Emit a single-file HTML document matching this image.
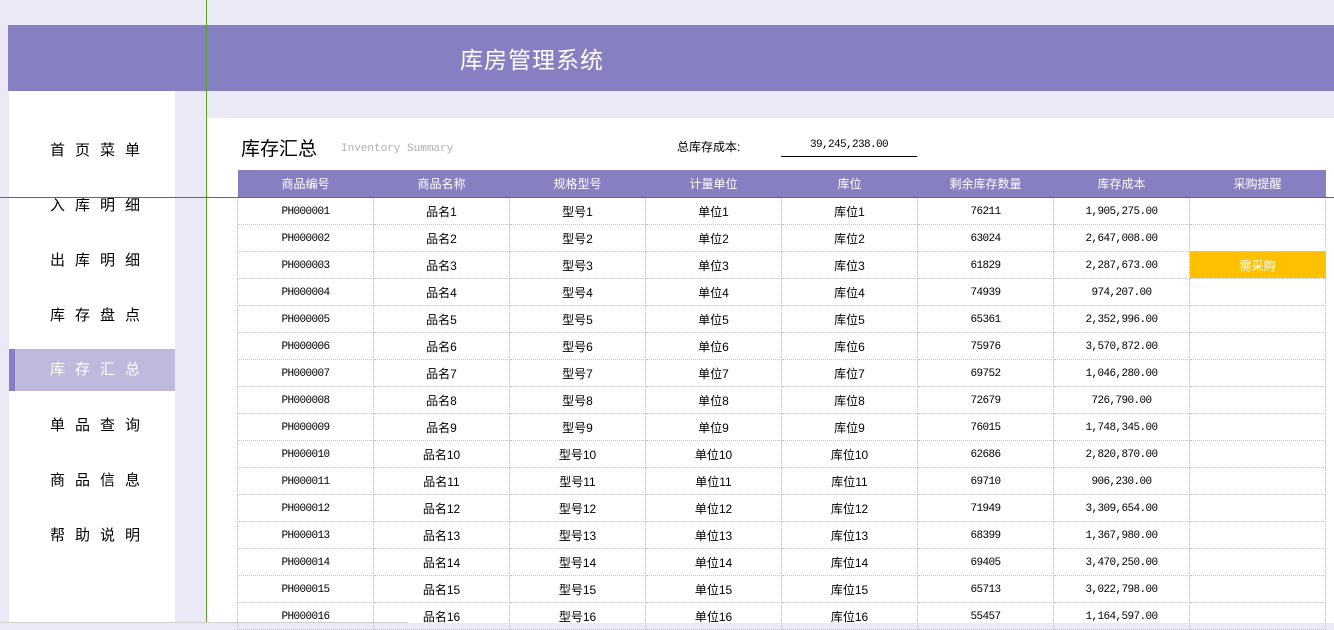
<!DOCTYPE html>
<html><head><meta charset="utf-8"><style>
*{margin:0;padding:0;box-sizing:border-box}
body{width:1334px;height:623px;overflow:hidden;background:#ebe9f5;position:relative;font-family:"Liberation Sans","Noto Sans CJK SC",sans-serif}
.hdr{position:absolute;left:8px;top:25px;width:1326px;height:66px;background:#8680c2}
.hdr span{position:absolute;left:452px;top:16px;color:#fff;font-size:23px;letter-spacing:1px}
.side{position:absolute;left:9px;top:91px;width:166px;height:532px;background:#fff}
.side div{position:absolute;left:0;width:166px;height:42px;line-height:42px;text-align:center;font-size:15px;letter-spacing:10px;padding-left:16px;color:#000}
.side .act{background:#bebade;color:#fff;border-left:6px solid #8680c2}
.panel{position:absolute;left:207px;top:118px;width:1127px;height:505px;background:#fff}
.vl{position:absolute;left:206px;top:0;width:1px;height:623px;background:#5aa02c}
.hl{position:absolute;left:0;top:197px;width:1334px;height:1px;background:#4f7a3a}
table{position:absolute;left:237px;top:170px;border-collapse:collapse;table-layout:fixed;width:1089px}
td,th{width:136px;height:27px;text-align:center;font-size:11px}
th{background:#8680c2;color:#fff;font-weight:normal;font-size:12px;height:27px}
td{border:1px dotted #c6bfe2;font-family:"Liberation Mono","Noto Sans CJK SC",monospace;font-size:11px;letter-spacing:-0.6px;padding-top:3px;color:#000}
td.cn{font-family:"Liberation Sans","Noto Sans CJK SC",sans-serif;font-size:12px;letter-spacing:0;padding-top:1px}
td.buy{background:#ffc000;color:#fff;font-family:"Liberation Sans","Noto Sans CJK SC",sans-serif;font-size:12px;letter-spacing:0;padding-top:1px}
</style></head><body>
<div class="hdr"><span>库房管理系统</span></div>
<div class="side">
<div style="top:39px">首页菜单</div>
<div style="top:94px">入库明细</div>
<div style="top:149px">出库明细</div>
<div style="top:204px">库存盘点</div>
<div class="act" style="top:258px;padding-left:10px">库存汇总</div>
<div style="top:314px">单品查询</div>
<div style="top:369px">商品信息</div>
<div style="top:424px">帮助说明</div>
</div>
<div class="panel"></div>
<div style="position:absolute;left:241px;top:134px;font-size:19px">库存汇总</div>
<div style="position:absolute;left:341px;top:143px;font-size:11px;color:#b0b0b0;font-family:'Liberation Mono',monospace">Inventory Summary</div>
<div style="position:absolute;left:677px;top:138px;font-size:12px">总库存成本:</div>
<div style="position:absolute;left:781px;top:139px;width:136px;height:18px;border-bottom:1px solid #000;text-align:center;font-size:11px;letter-spacing:-0.6px;font-family:'Liberation Mono',monospace">39,245,238.00</div>
<table>
<tr><th>商品编号</th><th>商品名称</th><th>规格型号</th><th>计量单位</th><th>库位</th><th>剩余库存数量</th><th>库存成本</th><th>采购提醒</th></tr>
<tr><td>PH000001</td><td class="cn">品名1</td><td class="cn">型号1</td><td class="cn">单位1</td><td class="cn">库位1</td><td>76211</td><td>1,905,275.00</td><td></td></tr>
<tr><td>PH000002</td><td class="cn">品名2</td><td class="cn">型号2</td><td class="cn">单位2</td><td class="cn">库位2</td><td>63024</td><td>2,647,008.00</td><td></td></tr>
<tr><td>PH000003</td><td class="cn">品名3</td><td class="cn">型号3</td><td class="cn">单位3</td><td class="cn">库位3</td><td>61829</td><td>2,287,673.00</td><td class="buy">需采购</td></tr>
<tr><td>PH000004</td><td class="cn">品名4</td><td class="cn">型号4</td><td class="cn">单位4</td><td class="cn">库位4</td><td>74939</td><td>974,207.00</td><td></td></tr>
<tr><td>PH000005</td><td class="cn">品名5</td><td class="cn">型号5</td><td class="cn">单位5</td><td class="cn">库位5</td><td>65361</td><td>2,352,996.00</td><td></td></tr>
<tr><td>PH000006</td><td class="cn">品名6</td><td class="cn">型号6</td><td class="cn">单位6</td><td class="cn">库位6</td><td>75976</td><td>3,570,872.00</td><td></td></tr>
<tr><td>PH000007</td><td class="cn">品名7</td><td class="cn">型号7</td><td class="cn">单位7</td><td class="cn">库位7</td><td>69752</td><td>1,046,280.00</td><td></td></tr>
<tr><td>PH000008</td><td class="cn">品名8</td><td class="cn">型号8</td><td class="cn">单位8</td><td class="cn">库位8</td><td>72679</td><td>726,790.00</td><td></td></tr>
<tr><td>PH000009</td><td class="cn">品名9</td><td class="cn">型号9</td><td class="cn">单位9</td><td class="cn">库位9</td><td>76015</td><td>1,748,345.00</td><td></td></tr>
<tr><td>PH000010</td><td class="cn">品名10</td><td class="cn">型号10</td><td class="cn">单位10</td><td class="cn">库位10</td><td>62686</td><td>2,820,870.00</td><td></td></tr>
<tr><td>PH000011</td><td class="cn">品名11</td><td class="cn">型号11</td><td class="cn">单位11</td><td class="cn">库位11</td><td>69710</td><td>906,230.00</td><td></td></tr>
<tr><td>PH000012</td><td class="cn">品名12</td><td class="cn">型号12</td><td class="cn">单位12</td><td class="cn">库位12</td><td>71949</td><td>3,309,654.00</td><td></td></tr>
<tr><td>PH000013</td><td class="cn">品名13</td><td class="cn">型号13</td><td class="cn">单位13</td><td class="cn">库位13</td><td>68399</td><td>1,367,980.00</td><td></td></tr>
<tr><td>PH000014</td><td class="cn">品名14</td><td class="cn">型号14</td><td class="cn">单位14</td><td class="cn">库位14</td><td>69405</td><td>3,470,250.00</td><td></td></tr>
<tr><td>PH000015</td><td class="cn">品名15</td><td class="cn">型号15</td><td class="cn">单位15</td><td class="cn">库位15</td><td>65713</td><td>3,022,798.00</td><td></td></tr>
<tr><td>PH000016</td><td class="cn">品名16</td><td class="cn">型号16</td><td class="cn">单位16</td><td class="cn">库位16</td><td>55457</td><td>1,164,597.00</td><td></td></tr>
</table>
<div class="vl"></div>
<div class="hl"></div>
<div style="position:absolute;left:0;top:622px;width:408px;height:1px;background:#d0d0d0"></div>
</body></html>
